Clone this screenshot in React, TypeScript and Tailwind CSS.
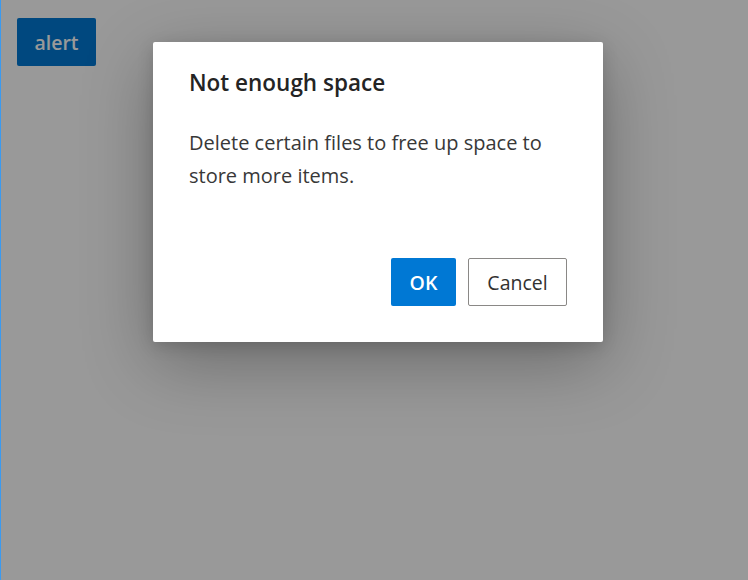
export default function App() {
  return (
    <div
      className="relative h-[580px] w-[748px] overflow-hidden bg-white"
      style={{ fontFamily: '"Open Sans", "Noto Sans", sans-serif' }}
    >
      <div className="absolute left-0 top-0 h-full w-px bg-[#3b9af0]" />
      <div className="p-[17px] pt-[18px]">
        <button className="h-[48px] w-[79px] rounded-[2px] bg-[#0078d4] pt-[1px] text-[19.5px] font-semibold text-white">
          alert
        </button>
      </div>
      <div className="absolute inset-0 left-px bg-black/40" />
      <div className="absolute left-[153px] top-[42px] flex h-[300px] w-[450px] flex-col rounded-[2px] bg-white px-[36px] pb-[36px] pt-[26px] shadow-[0_20px_70px_rgba(0,0,0,0.3),0_4px_16px_rgba(0,0,0,0.15)]">
        <h2 className="text-[22.5px] font-semibold leading-[30px] text-[#242424]">
          Not enough space
        </h2>
        <p className="mt-[28px] text-[20px] leading-[33px] text-[#383838]">
          Delete certain files to free up space to store more items.
        </p>
        <div className="mt-auto flex justify-end gap-[12px]">
          <button className="h-[48px] w-[65px] rounded-[2px] bg-[#0078d4] pt-[2px] text-[19.5px] font-semibold text-white">
            OK
          </button>
          <button className="h-[48px] w-[99px] rounded-[2px] border border-[#8a8886] bg-white pt-[2px] text-[19.5px] font-medium text-[#323130]">
            Cancel
          </button>
        </div>
      </div>
    </div>
  );
}
